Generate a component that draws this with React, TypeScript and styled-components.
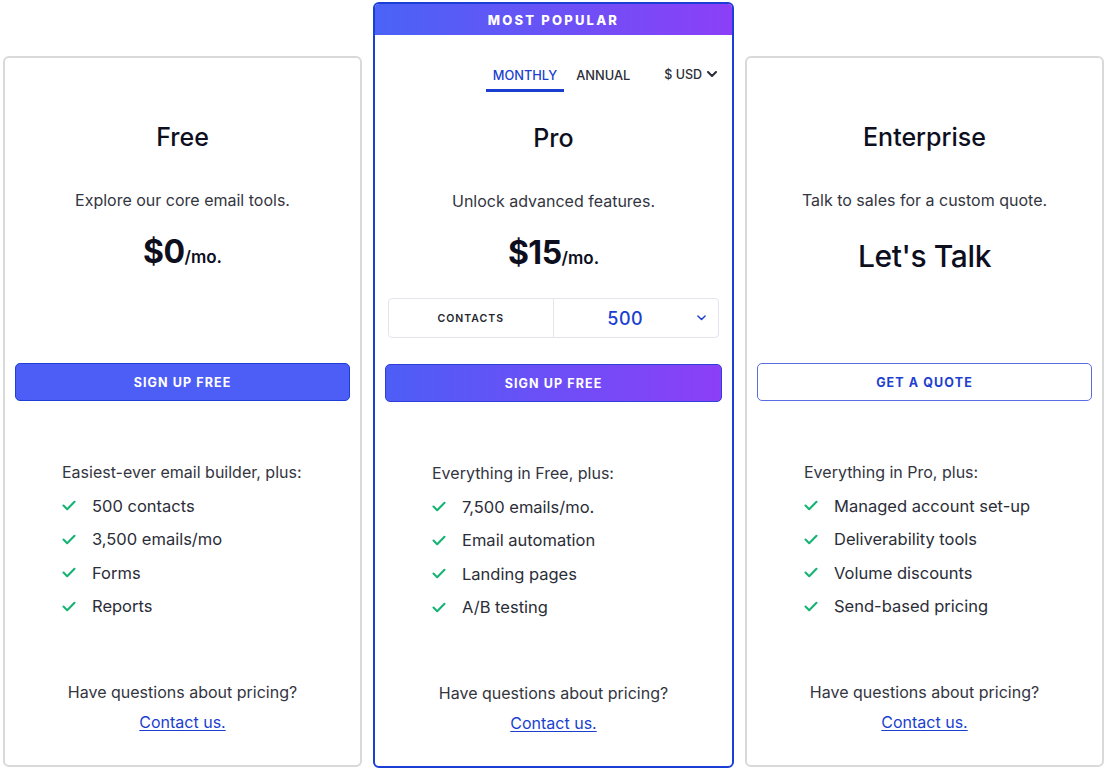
import React from "react";
import styled, { createGlobalStyle, css } from "styled-components";

const Global = createGlobalStyle`
  html, body { margin: 0; padding: 0; background: #ffffff; }
  body { font-family: Inter, "Noto Sans", "Liberation Sans", sans-serif; color: #1f2230; }
  * { box-sizing: border-box; }
`;

const Row = styled.div`
  display: flex;
  align-items: flex-end;
  gap: 11px;
  padding: 2px 0 1px 3px;
  height: 769px;
`;

const Card = styled.div<{ $featured?: boolean }>`
  display: flex;
  flex-direction: column;
  width: ${(p) => (p.$featured ? 361 : 359)}px;
  height: ${(p) => (p.$featured ? 766 : 711)}px;
  border: 2px solid ${(p) => (p.$featured ? "#1b3fd4" : "#d9d9d9")};
  border-radius: 6px;
  overflow: hidden;
  background: #fff;
  margin-bottom: ${(p) => (p.$featured ? 0 : 1)}px;
`;

const Banner = styled.div`
  height: 31px;
  display: flex;
  align-items: center;
  justify-content: center;
  background: linear-gradient(90deg, #4a63f6 0%, #6a52f6 50%, #8c3ff7 100%);
  color: #fff;
  font-size: 13px;
  font-weight: 800;
  letter-spacing: 2.2px;
`;

const Spacer = styled.div<{ $h: number }>`
  height: ${(p) => p.$h}px;
  flex: none;
`;

const Tabs = styled.div`
  display: flex;
  align-items: flex-start;
  justify-content: flex-end;
  margin-top: 24px;
  padding-right: 15px;
  height: 33px;
`;

const Tab = styled.div<{ $active?: boolean }>`
  height: 33px;
  padding: 3px 7px 0;
  display: flex;
  align-items: center;
  font-size: 12.8px;
  font-weight: 500;
  margin-right: 5px;
  color: ${(p) => (p.$active ? "#1a3fd0" : "#2b2d38")};
  border-bottom: 3px solid ${(p) => (p.$active ? "#1a3fd0" : "transparent")};
`;

const Currency = styled.div`
  margin-left: 22px;
  height: 30px;
  display: flex;
  align-items: center;
  gap: 5px;
  font-size: 12.5px;
  font-weight: 500;
  color: #2b2d38;
`;

const Body = styled.div`
  display: flex;
  flex-direction: column;
  flex: 1;
  padding: 0 10px 28px;
`;

const Title = styled.h2`
  margin: 0;
  text-align: center;
  font-size: 25px;
  line-height: 32px;
  font-weight: 500;
  color: #0d0f1e;
`;

const Desc = styled.p`
  margin: 35px 0 0;
  text-align: center;
  font-size: 16px;
  line-height: 24px;
  color: #33353f;
`;

const Price = styled.div<{ $plain?: boolean }>`
  margin-top: 20px;
  height: 40px;
  display: flex;
  align-items: baseline;
  justify-content: center;
  color: #0d0f1e;
  font-size: ${(p) => (p.$plain ? 30 : 32)}px;
  line-height: ${(p) => (p.$plain ? 48 : 40)}px;
  font-weight: ${(p) => (p.$plain ? 500 : 700)};
  letter-spacing: ${(p) => (p.$plain ? "-0.4px" : "-0.5px")};
`;

const Per = styled.span`
  font-size: 17px;
  font-weight: 600;
  letter-spacing: 0;
`;

const Extra = styled.div`
  height: 91px;
  padding-top: 25px;
`;

const Select = styled.div`
  height: 40px;
  display: flex;
  border: 1px solid #e3e4ee;
  border-radius: 4px;
  margin: 0 3px;
`;

const SelectLabel = styled.div`
  width: 50%;
  display: flex;
  align-items: center;
  justify-content: center;
  font-size: 10.5px;
  font-weight: 600;
  letter-spacing: 1px;
  color: #24262f;
  border-right: 1px solid #e3e4ee;
`;

const SelectValue = styled.div`
  flex: 1;
  display: flex;
  align-items: center;
  padding-right: 12px;
  color: #1a3fd0;
`;

const ValueText = styled.span`
  flex: 1;
  text-align: center;
  font-size: 18px;
  font-weight: 500;
  letter-spacing: 0.5px;
`;

const Button = styled.button<{ $variant: "solid" | "gradient" | "outline" }>`
  height: 38px;
  width: 100%;
  margin: 0;
  border-radius: 5px;
  font-family: inherit;
  font-size: 12.5px;
  font-weight: 700;
  letter-spacing: 1.1px;
  cursor: pointer;
  ${(p) =>
    p.$variant === "solid" &&
    css`
      background: #4d5ef6;
      border: 1px solid #1f3fd6;
      color: #fff;
    `}
  ${(p) =>
    p.$variant === "gradient" &&
    css`
      background: linear-gradient(90deg, #4d5ef6 0%, #8c3ff7 100%);
      border: 1px solid #2d3fd6;
      color: #fff;
    `}
  ${(p) =>
    p.$variant === "outline" &&
    css`
      background: #fff;
      border: 1px solid #5a6de2;
      color: #1f3fcf;
    `}
`;

const Features = styled.div`
  margin-top: 55px;
  padding-left: 47px;
`;

const FeatureHead = styled.div`
  font-size: 16px;
  line-height: 33px;
  color: #33353f;
`;

const FeatureItem = styled.div`
  display: flex;
  align-items: center;
  height: 33.5px;
  font-size: 16.5px;
  color: #2b2d38;
`;

const CheckWrap = styled.span`
  width: 30px;
  display: flex;
  align-items: center;
  flex: none;
`;

const Footer = styled.div`
  margin-top: auto;
  text-align: center;
`;

const FooterText = styled.div`
  font-size: 16px;
  line-height: 30px;
  color: #33353f;
`;

const ContactLink = styled.a`
  display: block;
  font-size: 16px;
  line-height: 30px;
  color: #1a3fd0;
  text-decoration: underline;
  text-underline-offset: 2px;
`;

const Check = () => (
  <svg width="14" height="11" viewBox="0 0 14 11" fill="none">
    <path d="M1.5 5.6 L5.2 9.2 L12.5 1.8" stroke="#16b374" strokeWidth="2.1" strokeLinecap="round" strokeLinejoin="round" />
  </svg>
);

const Chevron = ({ w = 10, sw = 2 }: { w?: number; sw?: number }) => (
  <svg width={w} height={w * 0.6} viewBox="0 0 10 6" fill="none">
    <path d="M1 1 L5 5 L9 1" stroke="currentColor" strokeWidth={sw} strokeLinecap="round" strokeLinejoin="round" />
  </svg>
);

type Plan = {
  name: string;
  desc: string;
  price: React.ReactNode;
  plain?: boolean;
  button: string;
  variant: "solid" | "gradient" | "outline";
  head: string;
  items: string[];
  featured?: boolean;
};

const plans: Plan[] = [
  {
    name: "Free",
    desc: "Explore our core email tools.",
    price: (
      <>
        $0<Per>/mo.</Per>
      </>
    ),
    button: "SIGN UP FREE",
    variant: "solid",
    head: "Easiest-ever email builder, plus:",
    items: ["500 contacts", "3,500 emails/mo", "Forms", "Reports"],
  },
  {
    name: "Pro",
    desc: "Unlock advanced features.",
    price: (
      <>
        $15<Per>/mo.</Per>
      </>
    ),
    button: "SIGN UP FREE",
    variant: "gradient",
    head: "Everything in Free, plus:",
    items: ["7,500 emails/mo.", "Email automation", "Landing pages", "A/B testing"],
    featured: true,
  },
  {
    name: "Enterprise",
    desc: "Talk to sales for a custom quote.",
    price: "Let's Talk",
    plain: true,
    button: "GET A QUOTE",
    variant: "outline",
    head: "Everything in Pro, plus:",
    items: ["Managed account set-up", "Deliverability tools", "Volume discounts", "Send-based pricing"],
  },
];

const PlanCard = ({ plan }: { plan: Plan }) => (
  <Card $featured={plan.featured}>
    {plan.featured ? (
      <>
        <Banner>MOST POPULAR</Banner>
        <Tabs>
          <Tab $active>MONTHLY</Tab>
          <Tab>ANNUAL</Tab>
          <Currency>
            $ USD <Chevron w={10} sw={2} />
          </Currency>
        </Tabs>
        <Spacer $h={30} />
      </>
    ) : (
      <Spacer $h={63} />
    )}
    <Body>
      <Title>{plan.name}</Title>
      <Desc>{plan.desc}</Desc>
      <Price $plain={plan.plain}>{plan.price}</Price>
      <Extra>
        {plan.featured && (
          <Select>
            <SelectLabel>CONTACTS</SelectLabel>
            <SelectValue>
              <ValueText>500</ValueText>
              <Chevron w={9} sw={1.6} />
            </SelectValue>
          </Select>
        )}
      </Extra>
      <Button $variant={plan.variant}>{plan.button}</Button>
      <Features>
        <FeatureHead>{plan.head}</FeatureHead>
        {plan.items.map((it) => (
          <FeatureItem key={it}>
            <CheckWrap>
              <Check />
            </CheckWrap>
            {it}
          </FeatureItem>
        ))}
      </Features>
      <Footer>
        <FooterText>Have questions about pricing?</FooterText>
        <ContactLink href="#">Contact us.</ContactLink>
      </Footer>
    </Body>
  </Card>
);

export default function App() {
  return (
    <>
      <Global />
      <Row>
        {plans.map((p) => (
          <PlanCard key={p.name} plan={p} />
        ))}
      </Row>
    </>
  );
}
